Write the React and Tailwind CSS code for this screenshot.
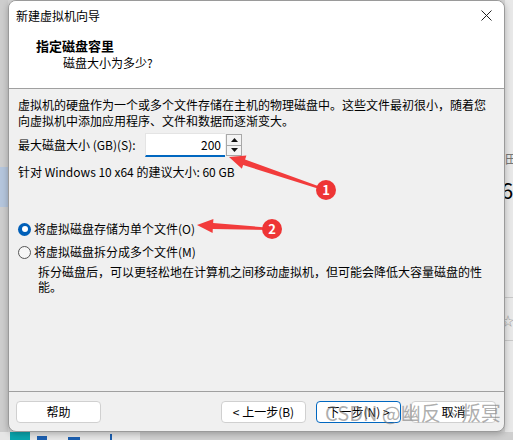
import React from "react";

const font = { fontFamily: '"Noto Sans CJK SC", "Noto Sans", sans-serif' };

function Btn({ children, primary }) {
  return (
    <div
      className={
        "w-[85px] h-[22px] rounded-[4px] bg-white flex items-center justify-center text-[12px] leading-[16px] text-black " +
        (primary ? "border border-[#0067c0]" : "border border-[#d0d0d0]")
      }
    >
      {children}
    </div>
  );
}

function Radio({ checked, children }) {
  return (
    <div className="flex items-center h-[16px] gap-[3px]">
      {checked ? (
        <div className="w-[13px] h-[13px] rounded-full bg-[#005fb8] flex items-center justify-center">
          <div className="w-[6px] h-[6px] rounded-full bg-white" />
        </div>
      ) : (
        <div className="w-[13px] h-[13px] rounded-full border border-[#555] bg-[#f6f6f6]" />
      )}
      <span className="text-[12px] leading-[16px] text-black">{children}</span>
    </div>
  );
}

export default function App() {
  return (
    <div className="relative w-[513px] h-[440px] overflow-hidden bg-[#d6d6d6]" style={font}>
      {/* desktop background fragments */}
      <div className="absolute left-0 top-0 w-[8px] h-[432px] bg-[#cdcdcd]" />
      <div className="absolute left-0 top-[167px] w-[8px] h-[40px] bg-[#b4c5dc]" />
      <div className="absolute left-0 top-[432px] w-[140px] h-[8px] bg-[#e6e6e6]" />
      <div className="absolute left-[140px] top-[432px] w-[373px] h-[8px] bg-[#cfcfcf]" />
      <div className="absolute left-[10px] top-[432px] w-[20px] h-[8px] bg-[#0aa5ad]" />
      <div className="absolute left-[37px] top-[436px] w-[10px] h-[4px] bg-[#1c5fb0]" />
      <div className="absolute left-[68px] top-[437px] w-[12px] h-[3px] bg-[#1c5fb0]" />
      <div className="absolute left-[110px] top-[434px] w-[2px] h-[6px] bg-[#1c5fb0]" />
      <div className="absolute left-[505px] top-0 w-[8px] h-[432px] bg-[#e8e8e8] overflow-hidden">
        <div className="absolute left-[0px] top-[152px] text-[12px] leading-[14px] text-[#777]">田</div>
        <div className="absolute left-[-4px] top-[176px] text-[22px] leading-[26px] text-black">6</div>
        <div className="absolute left-0 top-[297px] w-[8px] h-[1px] bg-[#c8c8c8]" />
        <div className="absolute left-[-3px] top-[314px] text-[12px] leading-[14px] text-[#999]">☆</div>
        <div className="absolute left-0 top-[340px] w-[8px] h-[1px] bg-[#c8c8c8]" />
      </div>

      {/* dialog window */}
      <div className="absolute left-[8px] top-0 w-[497px] h-[432px] rounded-[8px] border border-[#9a9a9a] bg-[#f0f0f0] overflow-hidden flex flex-col shadow-[0_2px_6px_rgba(0,0,0,0.25)]">
        {/* title bar */}
        <div className="h-[29px] bg-white flex items-center justify-between pl-[7px] pr-[12px]">
          <span className="text-[12px] leading-[16px] text-black">新建虚拟机向导</span>
          <svg width="11" height="11" viewBox="0 0 11 11">
            <path d="M0.5 0.5 L10.5 10.5 M10.5 0.5 L0.5 10.5" stroke="#222" strokeWidth="1" fill="none" />
          </svg>
        </div>
        {/* header */}
        <div className="h-[59px] bg-white border-b border-[#a0a0a0] pt-[7px]">
          <div className="pl-[27px] text-[13px] leading-[18px] font-bold text-black">指定磁盘容里</div>
          <div className="pl-[54px] text-[12px] leading-[16px] text-black">磁盘大小为多少?</div>
        </div>
        {/* body */}
        <div className="flex-1 pl-[9px] pt-[8px] flex flex-col">
          <p className="text-[12px] leading-[16px] text-black w-[470px]">
            虚拟机的硬盘作为一个或多个文件存储在主机的物理磁盘中。这些文件最初很小，随着您向虚拟机中添加应用程序、文件和数据而逐渐变大。
          </p>
          <div className="mt-[4px] flex items-center h-[24px]">
            <span className="w-[127px] text-[12px] leading-[16px] text-black">最大磁盘大小 (GB)(S):</span>
            <div className="w-[80px] h-[24px] bg-white border-t border-l border-[#e4e4e4] border-b-2 border-b-[#0067c0] flex items-center justify-end pr-[4px] text-[12px] leading-[16px] text-black">
              200
            </div>
            <div className="ml-[1px] w-[16px] h-[22px] border border-[#a8a8a8] bg-[#f4f4f4] flex flex-col">
              <div className="flex-1 flex items-center justify-center border-b border-[#a8a8a8]">
                <svg width="7" height="4" viewBox="0 0 7 4">
                  <path d="M3.5 0 L7 4 L0 4 Z" fill="#111" />
                </svg>
              </div>
              <div className="flex-1 flex items-center justify-center">
                <svg width="7" height="4" viewBox="0 0 7 4">
                  <path d="M0 0 L7 0 L3.5 4 Z" fill="#111" />
                </svg>
              </div>
            </div>
          </div>
          <div className="mt-[7px] text-[12px] leading-[16px] text-black">
            针对 Windows 10 x64 的建议大小: 60 GB
          </div>
          <div className="mt-[41px]">
            <Radio checked>将虚拟磁盘存储为单个文件(O)</Radio>
          </div>
          <div className="mt-[7px]">
            <Radio>将虚拟磁盘拆分成多个文件(M)</Radio>
          </div>
          <p className="mt-[4px] pl-[20px] w-[470px] text-[12px] leading-[15px] text-black">
            拆分磁盘后，可以更轻松地在计算机之间移动虚拟机，但可能会降低大容量磁盘的性能。
          </p>
        </div>
        {/* footer */}
        <div className="h-[40px] border-t border-[#a0a0a0] pt-[9px] pl-[7px] pr-[8px] flex items-start">
          <Btn>帮助</Btn>
          <div className="flex-1" />
          <div className="flex gap-[10px]">
            <Btn>&lt; 上一步(B)</Btn>
            <Btn primary>下一步(N) &gt;</Btn>
            <Btn>取消</Btn>
          </div>
        </div>
      </div>

      {/* watermark */}
      <div className="absolute left-[325px] top-[400px] text-[20px] leading-[26px] text-[rgba(120,120,120,0.6)] whitespace-nowrap pointer-events-none">
        CSDN @幽反丶叛冥
      </div>

      {/* annotations */}
      <svg className="absolute left-0 top-0 pointer-events-none" width="513" height="440" viewBox="0 0 513 440">
        <polygon
          points="326.3,189.1 245.1,159.4 246.4,155.6 229,157 241.9,168.8 243.1,165.0 325.7,190.9"
          fill="#f23c3c"
        />
        <circle cx="326" cy="190" r="10" fill="#ee3535" />
        <text x="326" y="194.5" textAnchor="middle" fontSize="13" fontWeight="bold" fill="#fff" style={font}>1</text>
        <polygon
          points="272.05,228.0 213.16,222.9 213.4,218.9 197,225 212.6,232.9 212.8,228.9 271.95,230.0"
          fill="#f23c3c"
        />
        <circle cx="272" cy="229" r="10" fill="#ee3535" />
        <text x="272" y="233.5" textAnchor="middle" fontSize="13" fontWeight="bold" fill="#fff" style={font}>2</text>
      </svg>
    </div>
  );
}
